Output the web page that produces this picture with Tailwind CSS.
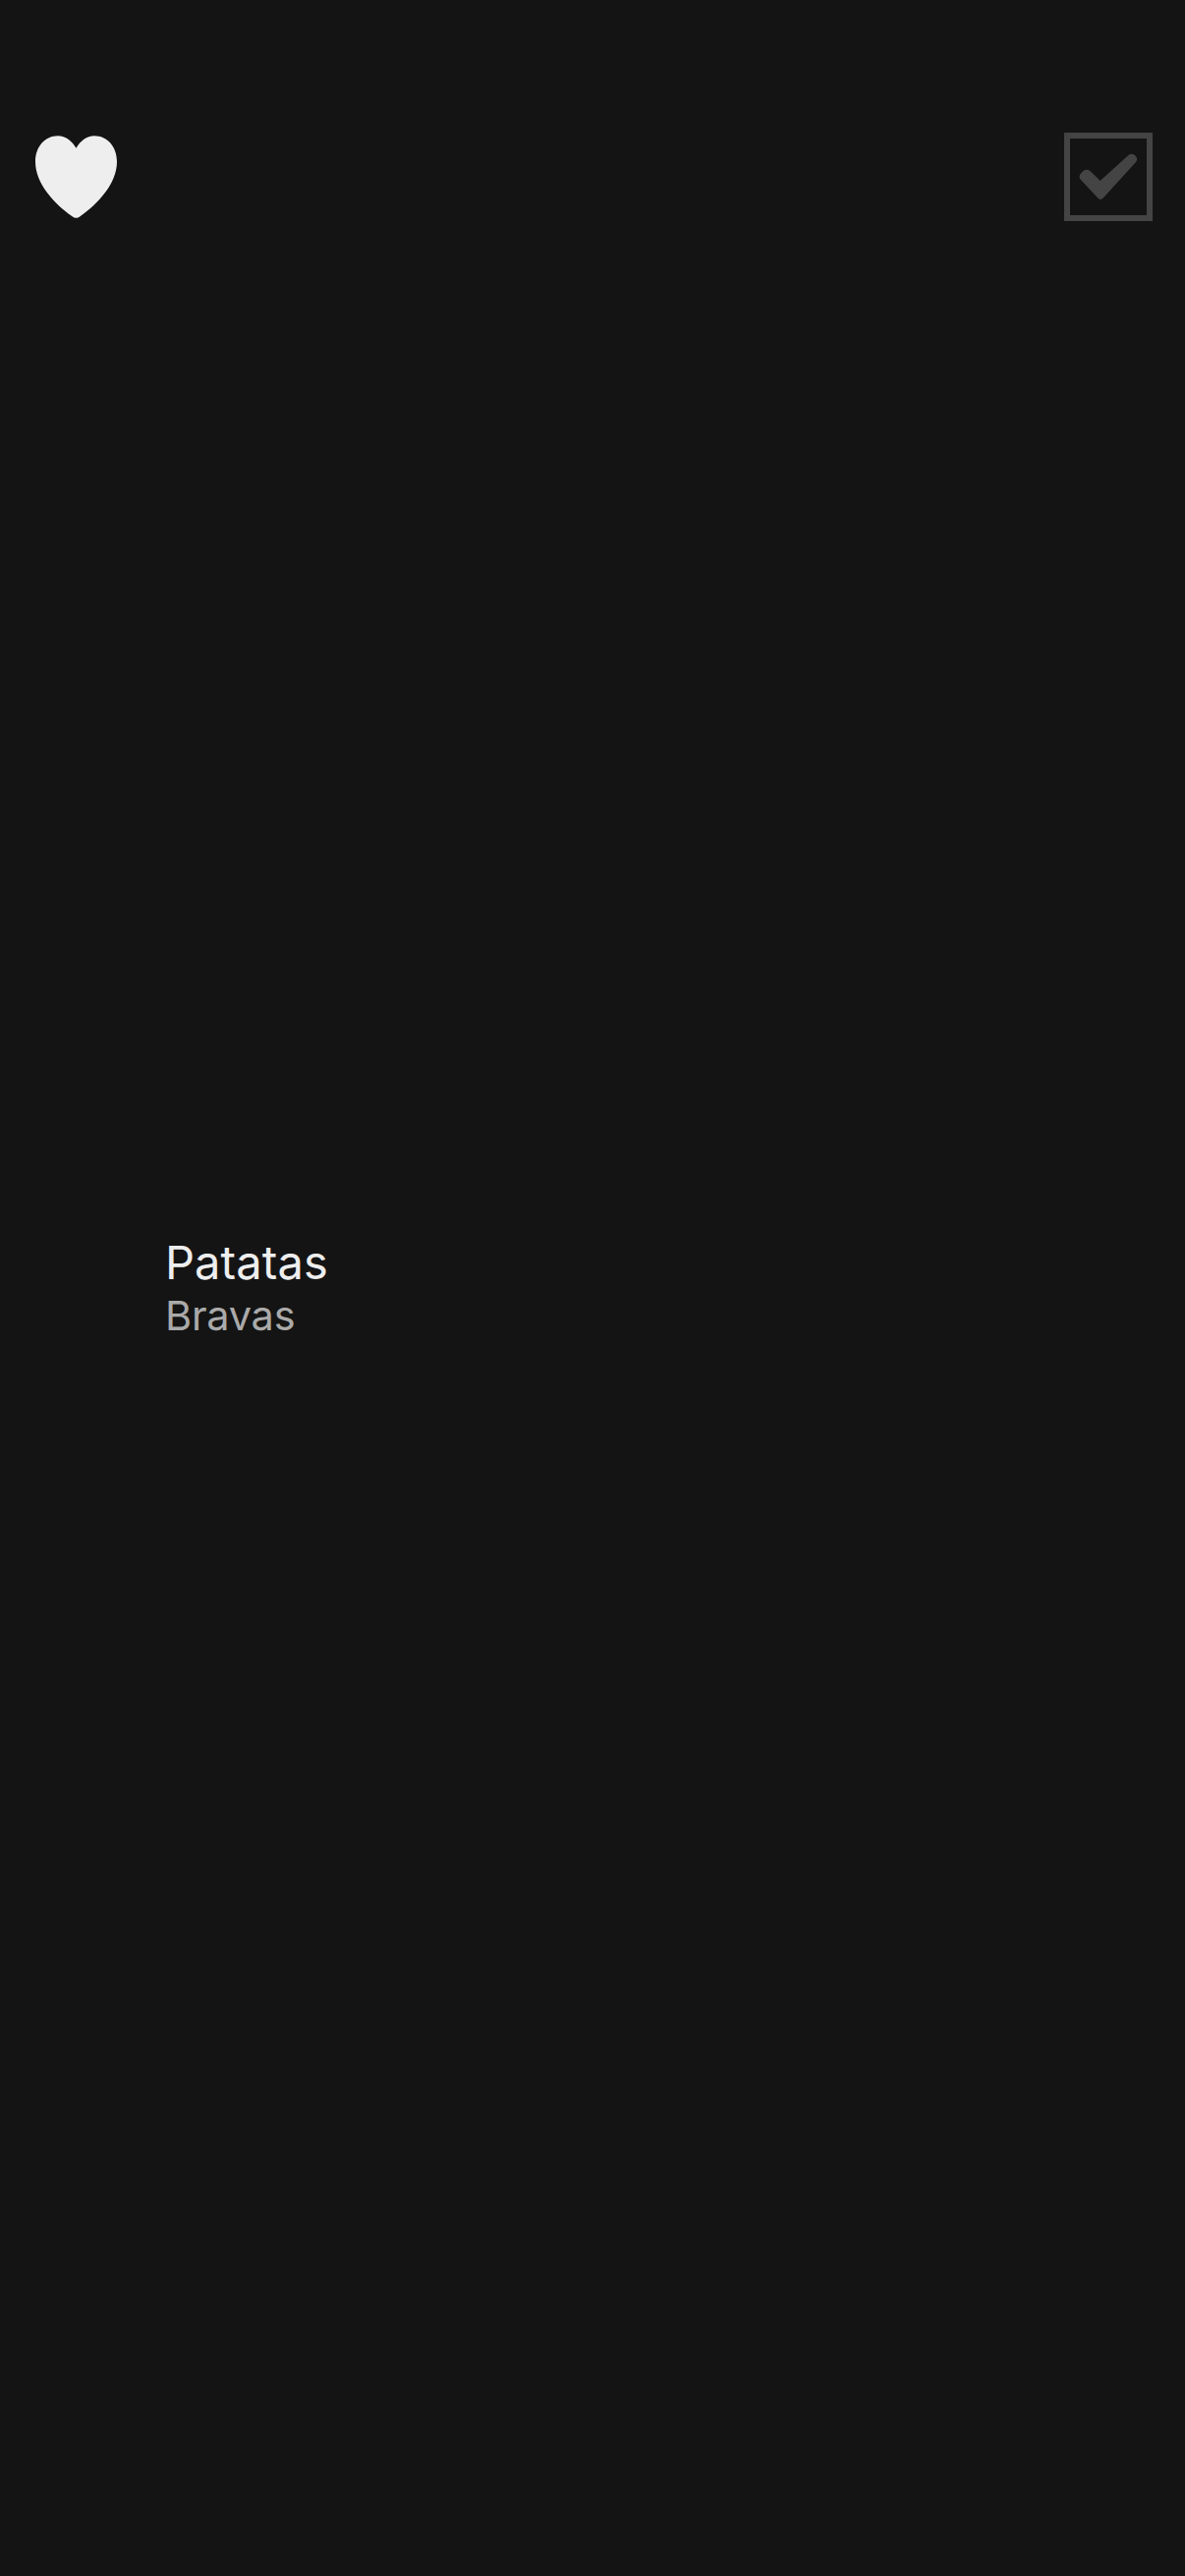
<!DOCTYPE html>
<html lang="en">
<head>
<meta charset="utf-8">
<title>Patatas</title>
<script src="https://cdn.jsdelivr.net/npm/@tailwindcss/browser@4"></script>
</head>
<body class="bg-[#141414]">
<div class="flex h-[2622px] w-[1206px] flex-col overflow-hidden bg-[#141414] font-['Inter',sans-serif]">
  <header class="flex justify-between px-[33px] pt-[135px]">
    <svg class="size-[90px]" viewBox="0 0 90 90" fill="#eeeeee" aria-label="Favorite">
      <path d="M44.5 15.7C40.5 8.5 33.5 3.2 26 3.2C13 3.2 3 14 3 29.5C3 52 22 72 40.5 85.3C43.5 87.3 45.5 87.3 48.500 85.300C67 72 86 52 86 29.500C86 14 76 3.200 63 3.200C55.500 3.200 48.500 8.500 44.500 15.700Z"/>
    </svg>
    <svg class="size-[90px]" viewBox="0 0 90 90" fill="#444444" aria-label="Done">
      <path fill-rule="evenodd" d="M0 0H90V90H0ZM6 6V84H84V6Z"/>
      <path d="M17 48C14.800 45.500 15.500 43 17.500 41L19.500 39C22 37.300 24.500 37.500 26.700 39.300L36.700 49L65.700 22.700C68 21 70.500 21.500 72.500 23.500C74.700 25.700 74.700 28 73 30L40 66.300C38 68.500 36 68.500 34 66.300Z"/>
    </svg>
  </header>
  <main class="flex flex-col pt-[1031px] pl-[168px]">
    <h1 class="h-[58px] text-[47px] leading-[57px] tracking-[0.1px] text-[#eeeeee]">Patatas</h1>
    <p class="h-[50px] text-[41.500px] leading-[50px] tracking-[-0.25px] text-[#aaaaaa]">Bravas</p>
  </main>
</div>
</body>
</html>
